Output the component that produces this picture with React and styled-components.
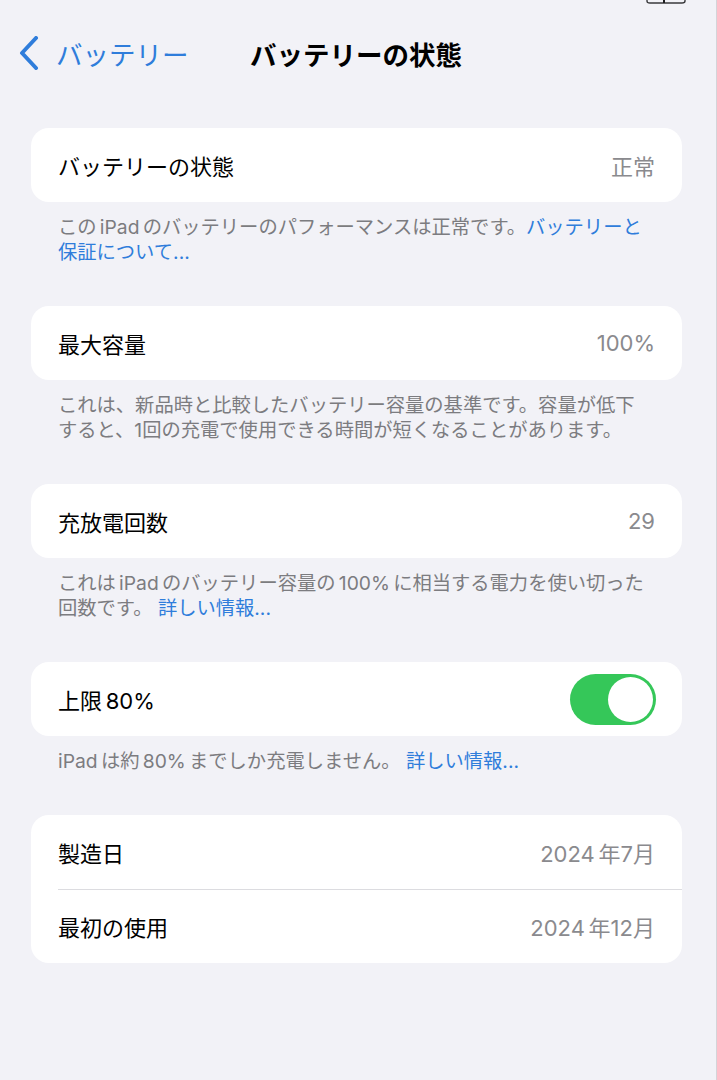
//BATTERY HEALTH

//IMPORTING
import React from "react";
import styled, { createGlobalStyle } from "styled-components";

//GLOBAL
const GlobalStyle = createGlobalStyle`
  html, body {
    margin: 0;
    padding: 0;
    background: #f2f2f7;
  }
  body {
    font-family: Inter, "Noto Sans CJK JP", "Noto Sans", sans-serif;
    -webkit-font-smoothing: antialiased;
  }
`;

//DATA
const groups = [
  {
    rows: [{ label: "バッテリーの状態", value: "正常" }],
    note: [
      [{ text: "このiPadのバッテリーのパフォーマンスは正常です。" }, { text: "バッテリーと", link: true }],
      [{ text: "保証について...", link: true }],
    ],
  },
  {
    rows: [{ label: "最大容量", value: "100%" }],
    note: [
      [{ text: "これは、新品時と比較したバッテリー容量の基準です。容量が低下" }],
      [{ text: "すると、1回の充電で使用できる時間が短くなることがあります。" }],
    ],
  },
  {
    rows: [{ label: "充放電回数", value: "29" }],
    note: [
      [{ text: "これはiPadのバッテリー容量の100%に相当する電力を使い切った" }],
      [{ text: "回数です。 " }, { text: "詳しい情報...", link: true }],
    ],
  },
  {
    rows: [{ label: "上限80%", toggle: true }],
    note: [[{ text: "iPadは約80%までしか充電しません。 " }, { text: "詳しい情報...", link: true }]],
  },
  {
    rows: [
      { label: "製造日", value: "2024年7月" },
      { label: "最初の使用", value: "2024年12月" },
    ],
  },
];

//SPACING BETWEEN LATIN AND JAPANESE (like iOS does)
const LATIN = /^[A-Za-z0-9%]+$/;
const spaced = (text) =>
  text.split(/([A-Za-z0-9%]+)/).map((part, i, all) => {
    if (!LATIN.test(part)) return part;
    const before = i > 0 && /[^\s.、年]$/.test(all[i - 1]);
    const after = i < all.length - 1 && /^[^\s.月回]/.test(all[i + 1]);
    return (
      <Latin key={i} $before={before} $after={after}>
        {part}
      </Latin>
    );
  });

//APP
const App = () => {
  return (
    <>
      <GlobalStyle />
      <Screen>
        <StatusBar>
          <svg width="40" height="4" viewBox="0 0 40 4">
            <path d="M1 0 V1 Q1 3 4 3 H36 Q39 3 39 1 V0" fill="none" stroke="#3a3a3c" strokeWidth="1.4" />
            <rect x="17" y="0" width="2" height="3" fill="#1c1c1e" />
          </svg>
        </StatusBar>
        <NavBar>
          <BackButton>
            <svg width="20" height="34" viewBox="0 0 20 34">
              <path d="M17 2 L3 17 L17 32" fill="none" stroke="#2f7ddb" strokeWidth="4" strokeLinecap="round" strokeLinejoin="round" />
            </svg>
            <span>バッテリー</span>
          </BackButton>
          <Title>バッテリーの状態</Title>
          <div />
        </NavBar>
        <Content>
          {groups.map((group, i) => (
            <Group key={i}>
              <Card>
                {group.rows.map((row) => (
                  <Row key={row.label}>
                    <Label>{spaced(row.label)}</Label>
                    {row.toggle ? (
                      <Toggle>
                        <Knob />
                      </Toggle>
                    ) : (
                      <Value>{spaced(row.value)}</Value>
                    )}
                  </Row>
                ))}
              </Card>
              {group.note && (
                <Note>
                  {group.note.map((line, j) => (
                    <NoteLine key={j}>
                      {line.map((seg, k) =>
                        seg.link ? <Link key={k}>{spaced(seg.text)}</Link> : <span key={k}>{spaced(seg.text)}</span>
                      )}
                    </NoteLine>
                  ))}
                </Note>
              )}
            </Group>
          ))}
        </Content>
      </Screen>
    </>
  );
};

//SCREEN
const Screen = styled.div`
  min-height: 1080px;
  background: #f2f2f7;
  border-right: 1px solid #d4d4d8;
  box-sizing: border-box;
  width: 717px;
`;

//STATUS BAR
const StatusBar = styled.div`
  height: 4px;
  display: flex;
  justify-content: flex-end;
  padding-right: 30px;
  svg {
    display: block;
  }
`;

//NAV BAR
const NavBar = styled.div`
  display: grid;
  grid-template-columns: 1fr auto 1fr;
  align-items: center;
  height: 100px;
  margin-top: 2px;
  padding: 0 19px;
  box-sizing: border-box;
  transform: translateY(-3px);
`;

const BackButton = styled.div`
  display: flex;
  align-items: center;
  gap: 17px;
  color: #2f7ddb;
  font-size: 26.5px;
  svg {
    display: block;
  }
`;

const Title = styled.div`
  font-size: 26.5px;
  font-weight: 700;
  color: #000;
  margin-left: -4px;
`;

//CONTENT
const Content = styled.div`
  padding: 22px 34px 0 31px;
  display: flex;
  flex-direction: column;
  gap: 41px;
`;

const Group = styled.div`
  display: flex;
  flex-direction: column;
`;

//CARD
const Card = styled.div`
  background: #fff;
  border-radius: 18px;
  overflow: hidden;
`;

const Row = styled.div`
  height: 74px;
  display: flex;
  align-items: center;
  justify-content: space-between;
  margin-left: 27px;
  padding-right: 27px;
  & + & {
    border-top: 1.5px solid #dcdce0;
    height: 72.5px;
  }
`;

const Label = styled.div`
  font-size: 22px;
  color: #000;
`;

const Value = styled.div`
  font-size: 22px;
  color: #8a8a8e;
`;

//LATIN RUN
const Latin = styled.span`
  margin-left: ${(p) => (p.$before ? "0.17em" : "0")};
  margin-right: ${(p) => (p.$after ? "0.17em" : "0")};
`;

//TOGGLE
const Toggle = styled.div`
  width: 86px;
  height: 51px;
  border-radius: 26px;
  background: #35c759;
  display: flex;
  align-items: center;
  justify-content: flex-end;
  padding: 3px;
  box-sizing: border-box;
  margin-right: -1px;
`;

const Knob = styled.div`
  width: 45px;
  height: 45px;
  border-radius: 50%;
  background: #fff;
`;

//NOTE
const Note = styled.div`
  padding: 13px 10px 0 27px;
  font-size: 19.3px;
  line-height: 25px;
  color: #7c7c80;
`;

const NoteLine = styled.div`
  white-space: nowrap;
`;

const Link = styled.span`
  color: #2f7ddb;
`;

export default App;
